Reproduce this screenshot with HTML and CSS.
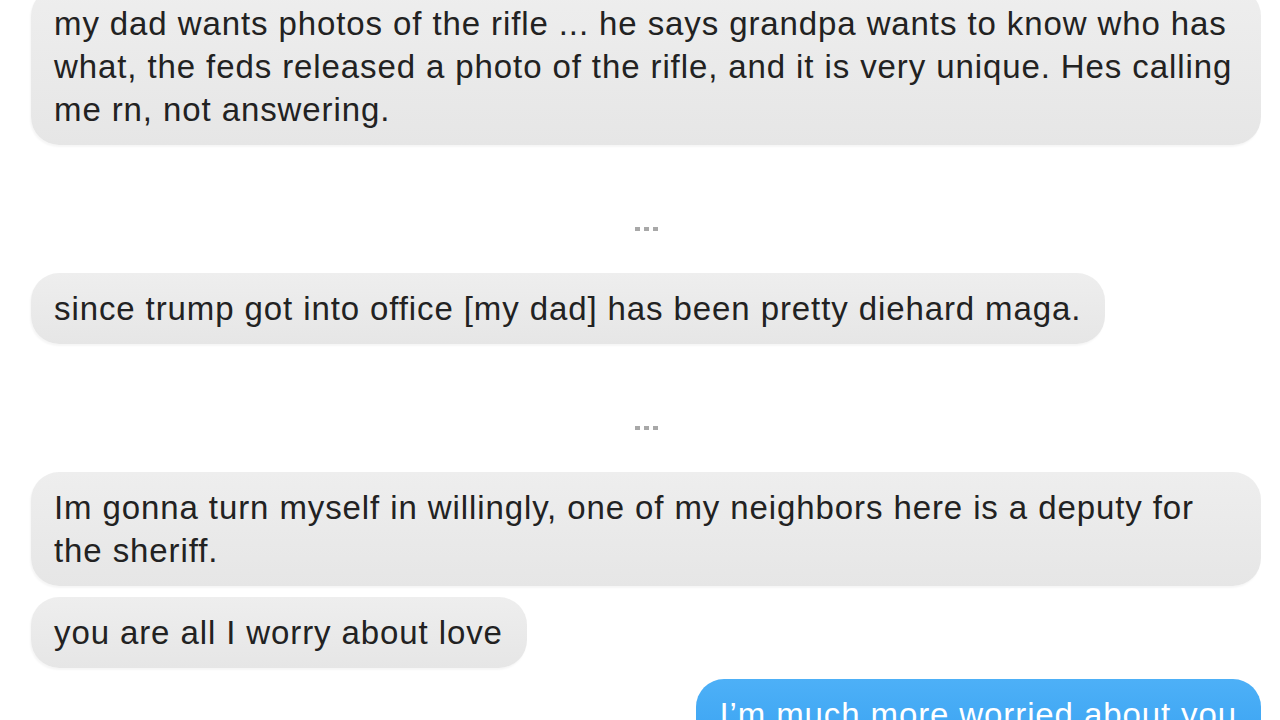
FILE: index.html
```html
<!DOCTYPE html>
<html lang="en">
<head>
    <meta charset="UTF-8">
    <title>Messages</title>
    <link rel="stylesheet" href="styles.css">
</head>
<body>
    <main class="thread">
        <div class="bubble received">my dad wants photos of the rifle ... he says grandpa wants to know who has what, the feds released a photo of the rifle, and it is very unique. Hes calling me rn, not answering.</div>

        <div class="gap-dots"><span></span><span></span><span></span></div>

        <div class="bubble received">since trump got into office [my dad] has been pretty diehard maga.</div>

        <div class="gap-dots"><span></span><span></span><span></span></div>

        <div class="bubble received">Im gonna turn myself in willingly, one of my neighbors here is a deputy for the sheriff.</div>
        <div class="bubble received">you are all I worry about love</div>
        <div class="bubble sent">I’m much more worried about you</div>
    </main>
</body>
</html>
```

FILE: styles.css
```css
body {
    margin: 0;
    background-color: #ffffff;
    font-family: 'Liberation Sans', Arial, sans-serif;
    overflow: hidden;
}

.thread {
    display: flex;
    flex-direction: column;
    align-items: flex-start;
    gap: 11px;
    margin-top: -12px;
    padding: 0 19px 0 31px;
}

.bubble {
    box-sizing: border-box;
    max-width: 1230px;
    padding: 14px 24px 14px 23px;
    border-radius: 28px;
    font-size: 33px;
    line-height: 43px;
    letter-spacing: 0.9px;
    color: #222222;
}

.received {
    background: linear-gradient(#eeeeee, #e6e6e6);
    box-shadow: -1px 2px 2px rgba(0, 0, 0, 0.04);
}

.sent {
    align-self: flex-end;
    background: linear-gradient(#4db0f7, #3aa3f2);
    color: #ffffff;
}

.gap-dots {
    align-self: stretch;
    display: flex;
    justify-content: center;
    gap: 4px;
    height: 4px;
    padding: 71px 0 31px;
}

.gap-dots span {
    width: 5px;
    height: 4px;
    background-color: #a8a8a8;
}
```
